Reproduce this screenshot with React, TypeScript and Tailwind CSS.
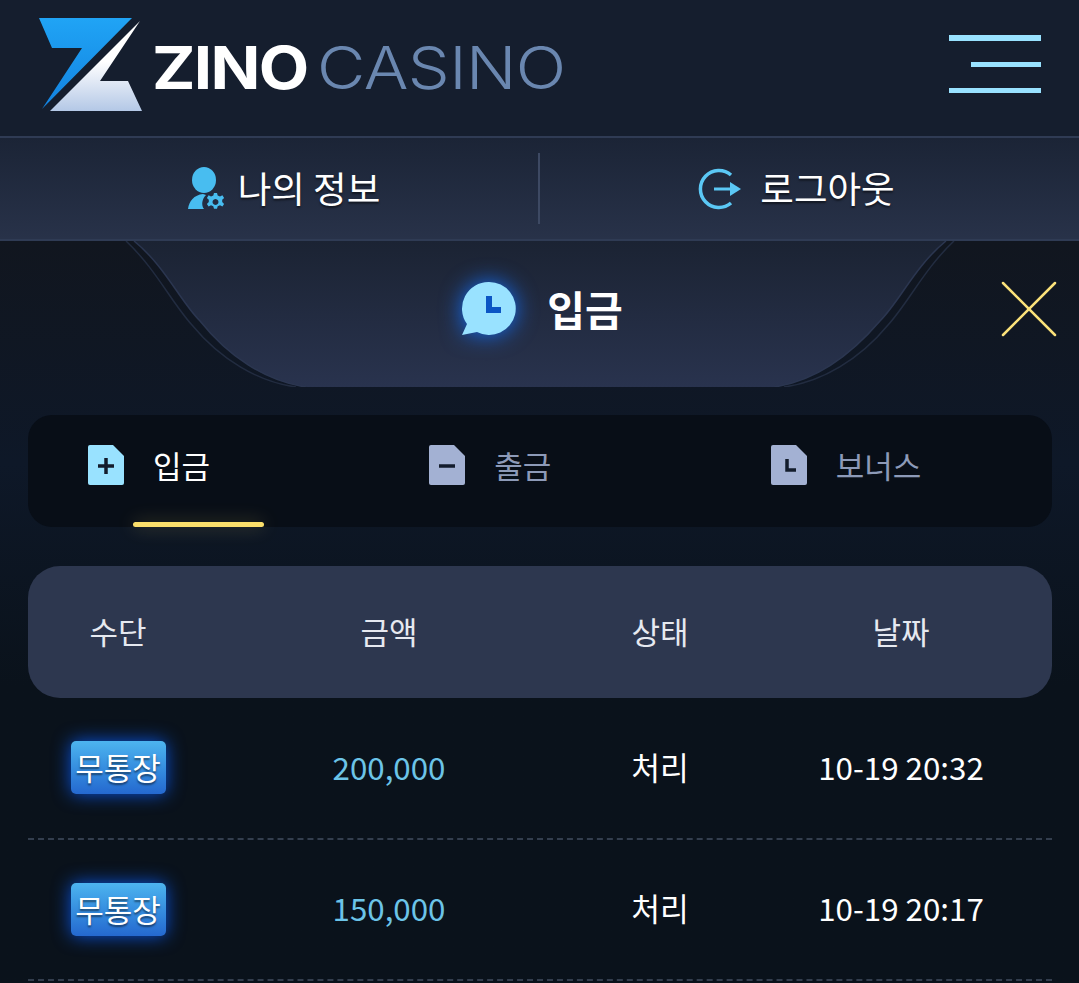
const rows = [
  { amount: '200,000', status: '처리', date: '10-19 20:32' },
  { amount: '150,000', status: '처리', date: '10-19 20:17' },
];

const tabs = [
  { label: '입금', mark: 'plus', active: true },
  { label: '출금', mark: 'minus', active: false },
  { label: '보너스', mark: 'clock', active: false },
];

export default function App() {
  return (
    <div className="h-[983px] w-full overflow-hidden bg-[#0a121b] font-['Noto_Sans_CJK_KR',sans-serif] text-white">
      {/* Header */}
      <header className="flex h-[136px] items-center justify-between bg-[#151e2e] pl-[39px] pr-[38px]">
        <div className="mb-[6px] flex items-center">
          <ZinoLogo />
          <div className="ml-[9px] mt-[4px] flex items-baseline font-['Inter',sans-serif] text-[59px] leading-none">
            <span className="w-[165px] origin-left scale-x-[1.11] font-bold tracking-[-1.5px] text-white">ZINO</span>
            <span className="origin-left scale-x-[1.125] font-light tracking-[-0.5px] text-[#6a87b0]">CASINO</span>
          </div>
        </div>
        <div className="mb-[8px] flex w-[92px] flex-col items-end gap-[21px]">
          <span className="h-[6px] w-full bg-[#99e2ff]" />
          <span className="h-[5px] w-[70px] bg-[#99e2ff]" />
          <span className="h-[5px] w-full bg-[#99e2ff]" />
        </div>
      </header>

      {/* Account links */}
      <nav className="flex h-[105px] items-center border-y-2 border-[#2f3b54] bg-gradient-to-b from-[#1b2436] to-[#283249]">
        <div className="flex w-[538px] items-center justify-center gap-[12px] pl-[30px]">
          <UserGearIcon />
          <span className="text-[36.5px] leading-none [text-shadow:0_2px_2px_rgba(0,0,0,0.5)]">나의 정보</span>
        </div>
        <div className="h-[71px] w-[2px] bg-[#3d4963]" />
        <div className="flex flex-1 items-center justify-center gap-[18px] pr-[28px]">
          <LogoutIcon />
          <span className="text-[36.5px] leading-none [text-shadow:0_2px_2px_rgba(0,0,0,0.5)]">로그아웃</span>
        </div>
      </nav>

      {/* Modal body */}
      <div className="bg-gradient-to-b from-[#11161f] via-[#0e1828] via-30% to-[#0a121b] to-60% pb-[1px]">
        <div className="relative flex h-[146px] items-center justify-center gap-[31px] pb-[12px] pl-[6px]">
          <TitleShape />
          <div className="relative mt-[2px]">
            <ChatClockIcon />
          </div>
          <h1 className="relative text-[41px] font-bold leading-none">입금</h1>
          <button className="absolute left-[1001px] top-[40px]">
            <svg width="56" height="56" viewBox="0 0 56 56" fill="none" stroke="#fbe27a" strokeWidth="2.5" strokeLinecap="round">
              <line x1="2" y1="2" x2="54" y2="54" />
              <line x1="54" y1="2" x2="2" y2="54" />
            </svg>
          </button>
        </div>

        <div className="ml-[28px] mr-[27px] mt-[28px] grid h-[112px] grid-cols-3 rounded-[24px] bg-[#080e17]">
          {tabs.map((tab) => (
            <div key={tab.label} className="relative flex items-center gap-[29px] pb-[12px] pl-[60px]">
              <DocIcon mark={tab.mark} active={tab.active} />
              <span className={`pb-[2px] text-[31px] leading-none ${tab.active ? 'text-white' : 'text-[#8d9ab8]'}`}>
                {tab.label}
              </span>
              {tab.active && (
                <span className="absolute bottom-0 left-[105px] h-[5px] w-[131px] rounded-full bg-[#fbdf6b] shadow-[0_0_18px_rgba(251,223,107,0.3)]" />
              )}
            </div>
          ))}
        </div>

        {/* Table */}
        <div className="ml-[28px] mr-[27px] mt-[39px]">
          <div className="grid h-[132px] grid-cols-[180px_362px_180px_302px] items-center rounded-[32px] bg-[#2d374f] pb-[4px] text-center text-[31px] leading-none text-[#e6e9f0]">
            <span>수단</span>
            <span>금액</span>
            <span>상태</span>
            <span>날짜</span>
          </div>
          {rows.map((row) => (
            <div
              key={row.date}
              className="grid h-[141.5px] grid-cols-[180px_362px_180px_302px] items-center border-b-2 border-dashed border-[#333e4e] text-center text-[31.3px] leading-none"
            >
              <div className="flex justify-center">
                <span className="flex h-[53px] w-[95px] items-center justify-center rounded-[5px] bg-gradient-to-b from-[#4db4ef] to-[#2568cf] pb-[2px] text-[31px] [text-shadow:0_2px_2px_rgba(0,0,0,0.5)] shadow-[0_0_18px_rgba(10,90,240,0.9)]">
                  무통장
                </span>
              </div>
              <span className="pb-[3px] text-[#6cc4e8]">{row.amount}</span>
              <span className="pb-[3px]">{row.status}</span>
              <span className="pb-[3px]">{row.date}</span>
            </div>
          ))}
        </div>
      </div>
    </div>
  );
}

function ZinoLogo() {
  return (
    <svg width="104" height="94" viewBox="0 0 104 94">
      <defs>
        <linearGradient id="zinoBlue" x1="0" y1="0" x2="0" y2="1">
          <stop offset="0" stopColor="#20a4f5" />
          <stop offset="1" stopColor="#1282e0" />
        </linearGradient>
        <linearGradient id="zinoWhite" x1="0" y1="0" x2="0" y2="1">
          <stop offset="0.45" stopColor="#ffffff" />
          <stop offset="1" stopColor="#b4c8e6" />
        </linearGradient>
      </defs>
      <polygon points="0,0 93,0 3,91 43,30 13,30" fill="url(#zinoBlue)" />
      <polygon points="101,3 11,93 103,93 89,63 61,63" fill="url(#zinoWhite)" />
    </svg>
  );
}

function UserGearIcon() {
  return (
    <svg width="38" height="44" viewBox="0 0 38 44" fill="#48bdf0">
      <ellipse cx="16" cy="13" rx="12" ry="13" />
      <path d="M0 42 C1 34 6 28 15 27 C16 27 17 28 18 28 C14 32 13 38 16 42 Z" />
      <path
        fillRule="evenodd"
        d="M26 26 h3 l.7 2.6 2.3 1 2.4-1.3 1.7 2.6-1.9 1.8 v2.4 l1.9 1.8-1.7 2.6-2.4-1.3-2.3 1-.7 2.6 h-3 l-.7-2.6-2.3-1-2.4 1.3-1.7-2.6 1.9-1.8 v-2.4 l-1.9-1.8 1.7-2.6 2.4 1.3 2.3-1 z M27.5 32 a3 3 0 1 0 .01 0 z"
      />
    </svg>
  );
}

function LogoutIcon() {
  return (
    <svg width="46" height="42" viewBox="0 0 46 42" fill="none">
      <path d="M35 7 A18.5 18.5 0 1 0 35 35" stroke="#5bc8f5" strokeWidth="3.5" />
      <path d="M18 21 H36" stroke="#5bc8f5" strokeWidth="3" />
      <polygon points="34,14 45,21 34,28" fill="#5bc8f5" />
    </svg>
  );
}

function TitleShape() {
  return (
    <svg className="absolute inset-0" width="1079" height="146" viewBox="0 0 1079 146" fill="none">
      <defs>
        <linearGradient id="titleFill" x1="0" y1="0" x2="0" y2="1">
          <stop offset="0" stopColor="#1b2333" />
          <stop offset="1" stopColor="#29334e" />
        </linearGradient>
      </defs>
      <path
        d="M134 0 C165 25 180 60 200 80 C228 115 265 140 306 146 L774 146 C815 140 850 115 880 80 C900 60 915 25 946 0 Z"
        fill="url(#titleFill)"
      />
      <path d="M134 0 C165 25 180 60 200 80 C228 115 265 140 306 146" stroke="#2b3650" strokeWidth="1.5" />
      <path d="M126 0 C155 27 172 62 192 84 C220 118 258 141 296 146" stroke="#222c40" strokeWidth="1.5" />
      <path d="M946 0 C915 25 900 60 880 80 C850 115 815 140 774 146" stroke="#2b3650" strokeWidth="1.5" />
      <path d="M954 0 C925 27 908 62 888 84 C860 118 822 141 784 146" stroke="#222c40" strokeWidth="1.5" />
    </svg>
  );
}

function ChatClockIcon() {
  return (
    <svg className="overflow-visible drop-shadow-[0_0_11px_rgba(20,110,245,1)]" width="54" height="54" viewBox="0 0 54 54">
      <path d="M27 0 A26.5 26.5 0 1 1 15 50 L0 53 L5 42 A26.5 26.5 0 0 1 27 0 Z" fill="#99e2ff" />
      <path d="M24 14 H30 V25 H39 V31 H24 Z" fill="#0b55c4" />
    </svg>
  );
}

function DocIcon({ mark, active }: { mark: string; active: boolean }) {
  const stroke = '#131c2c';
  return (
    <svg width="36" height="40" viewBox="0 0 36 40">
      <path
        d="M2 0 H25 L36 11 V38 a2 2 0 0 1-2 2 H2 a2 2 0 0 1-2-2 V2 a2 2 0 0 1 2-2 Z"
        fill={active ? '#99e2ff' : '#a3b1d3'}
      />
      {mark === 'plus' && <path d="M10 21 H26 M18 13 V29" stroke={stroke} strokeWidth="3.5" fill="none" />}
      {mark === 'minus' && <path d="M10 21 H26" stroke={stroke} strokeWidth="3.5" fill="none" />}
      {mark === 'clock' && <path d="M16 14 V25 H25" stroke={stroke} strokeWidth="3.5" fill="none" />}
    </svg>
  );
}
